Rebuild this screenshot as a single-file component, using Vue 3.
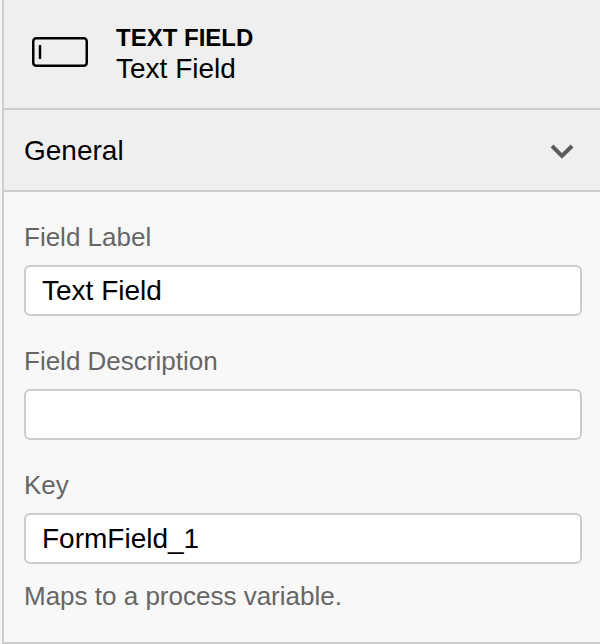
<script setup>
const fields = [
  { label: 'Field Label', value: 'Text Field' },
  { label: 'Field Description', value: '' },
  { label: 'Key', value: 'FormField_1', hint: 'Maps to a process variable.' }
]
</script>

<template>
  <div class="page">
    <div class="panel">
      <div class="header">
        <svg class="type_icon" width="56" height="30" viewBox="0 0 56 30" fill="none">
          <rect x="1.25" y="1.25" width="53.5" height="27.5" rx="3" stroke="#000" stroke-width="2.5" />
          <path d="M8 8v14" stroke="#000" stroke-width="2.5" />
        </svg>
        <div class="titles">
          <div class="type">TEXT FIELD</div>
          <div class="name">Text Field</div>
        </div>
      </div>
      <div class="group_head">
        <span>General</span>
        <svg width="24" height="16" viewBox="0 0 24 16" fill="none">
          <path d="M2 3l10 10 10-10" stroke="#5c5c5c" stroke-width="4" />
        </svg>
      </div>
      <div class="group_body">
        <div v-for="field in fields" :key="field.label" class="field">
          <label>{{ field.label }}</label>
          <input type="text" :value="field.value">
          <div v-if="field.hint" class="hint">{{ field.hint }}</div>
        </div>
      </div>
    </div>
  </div>
</template>

<style scoped>
.page {
  width: 600px;
  height: 644px;
  box-sizing: border-box;
  padding-left: 2px;
  background: #f4f4f4;
}

.panel {
  height: 644px;
  box-sizing: border-box;
  display: flex;
  flex-direction: column;
  background: #f8f8f8;
  border-left: 2px solid #ccc;
  border-bottom: 2px solid #ccc;
  font-family: "Liberation Sans", Arial, sans-serif;
  color: #000;
}

.header {
  height: 110px;
  box-sizing: border-box;
  display: flex;
  align-items: center;
  gap: 27px;
  padding: 0 0 4px 28px;
  background: #efefef;
  border-bottom: 2px solid #ccc;
}

.titles {
  margin: 2px 0 0 1px;
  line-height: 31px;
}

.type {
  font-size: 24px;
  font-weight: 700;
}

.name {
  font-size: 28px;
}

.group_head {
  height: 82px;
  box-sizing: border-box;
  display: flex;
  align-items: center;
  justify-content: space-between;
  padding: 1px 26px 0 20px;
  background: #efefef;
  border-bottom: 2px solid #ccc;
  font-size: 28px;
}

.group_body {
  padding: 29px 18px 0 20px;
}

.field {
  margin-bottom: 29px;
}

label {
  display: block;
  font-size: 26px;
  line-height: 32px;
  color: #666;
}

input {
  display: block;
  width: 100%;
  height: 51px;
  box-sizing: border-box;
  margin-top: 12px;
  padding: 0 16px;
  background: #fff;
  border: 2px solid #ccc;
  border-radius: 6px;
  font: 28px "Liberation Sans", Arial, sans-serif;
  color: #000;
}

.hint {
  margin-top: 16px;
  font-size: 26px;
  line-height: 32px;
  color: #666;
}
</style>
